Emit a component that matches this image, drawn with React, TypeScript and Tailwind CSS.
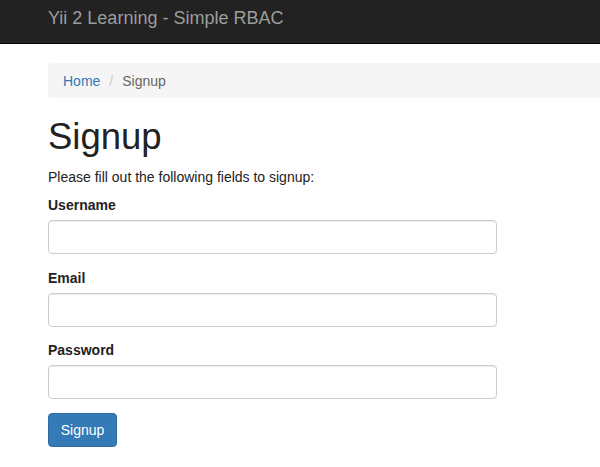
export default function App() {
  const fields = ['Username', 'Email', 'Password'];

  return (
    <div className="min-h-[467px] bg-white font-['Liberation_Sans',Arial,sans-serif] text-[14px] leading-[20px] text-[#333]">
      <nav className="h-[44px] bg-[#222] border-b border-[#080808] flex items-center pl-[48px]">
        <span className="text-[18px] leading-[20px] text-[#9d9d9d] -mt-[8px]">Yii 2 Learning - Simple RBAC</span>
      </nav>

      <div className="pl-[48px] pt-[19px]">
        <ul className="h-[35px] bg-[#f5f5f5] rounded-l-[4px] flex items-center px-[15px] mb-[19px]">
          <li className="text-[#337ab7]">Home</li>
          <li className="px-[9px] text-[#ccc]">/</li>
          <li className="text-[#666]">Signup</li>
        </ul>

        <h1 className="text-[36.5px] leading-[40px] font-medium text-[#222] mb-[10px]">Signup</h1>
        <p className="mb-[8px] text-[#222]">Please fill out the following fields to signup:</p>

        <form className="w-[449px]">
          {fields.map((f) => (
            <div key={f} className="mb-[13.5px]">
              <label className="block font-bold mb-[5px] text-[#222]">{f}</label>
              <input
                type={f === 'Password' ? 'password' : 'text'}
                className="block w-full h-[34px] border border-[#ccc] rounded-[4px] px-[12px] shadow-[inset_0_1px_1px_rgba(0,0,0,0.075)]"
              />
            </div>
          ))}
          <button
            type="button"
            className="h-[34px] w-[69px] bg-[#337ab7] border border-[#2e6da4] rounded-[4px] text-white font-medium"
          >
            Signup
          </button>
        </form>
      </div>
    </div>
  );
}
